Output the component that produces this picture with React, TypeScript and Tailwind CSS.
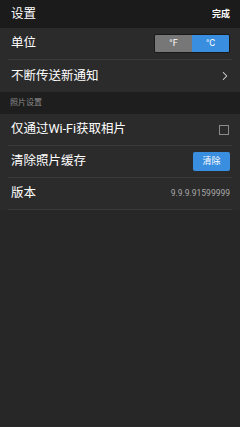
import { ChevronRight } from "lucide-react";

const font = { fontFamily: '"Roboto", "Noto Sans CJK SC", sans-serif' };

function Row({ children, last }: { children: React.ReactNode; last?: boolean }) {
  return (
    <div className="px-2">
      <div className={`flex h-[32px] items-center justify-between pl-[3px] pr-[2px] ${last ? "" : "border-b border-[#3a3a3a]"}`}>
        {children}
      </div>
    </div>
  );
}

export default function App() {
  return (
    <div className="min-h-[427px] w-[240px] bg-[#272727] text-white" style={font}>
      {/* Header */}
      <div className="flex h-[28px] items-center justify-between bg-[#1b1b1b] pl-[11px] pr-[10px]">
        <span className="text-[12.5px] leading-none">设置</span>
        <span className="text-[9px] font-bold leading-none">完成</span>
      </div>

      {/* Units + notifications */}
      <div className="bg-[#2b2b2b]">
        <Row>
          <span className="text-[12.5px] leading-none">单位</span>
          <div className="flex h-[19px] w-[76px] overflow-hidden rounded-[2px] border border-[#1a1a1a] text-[9px]">
            <div className="flex flex-1 items-center justify-center bg-[#777777]">°F</div>
            <div className="flex flex-1 items-center justify-center bg-[#3a8ee0]">°C</div>
          </div>
        </Row>
        <Row last>
          <span className="text-[12.5px] leading-none">不断传送新通知</span>
          <ChevronRight size={14} strokeWidth={1.75} className="-mr-[2px] text-[#dddddd]" />
        </Row>
      </div>

      {/* Section header */}
      <div className="flex h-[22px] items-center bg-[#1e1e1e] pl-[10px]">
        <span className="text-[8px] leading-none text-[#8a8a8a]">照片设置</span>
      </div>

      <div className="bg-[#2b2b2b]">
        <Row>
          <span className="text-[12.5px] leading-none">仅通过Wi-Fi获取相片</span>
          <div className="mr-[1px] h-[10px] w-[10px] border border-[#8a8a8a]" />
        </Row>
        <Row>
          <span className="text-[12.5px] leading-none">清除照片缓存</span>
          <div className="flex h-[19px] w-[37px] items-center justify-center rounded-[2px] bg-[#3a8ee0] text-[9px]">
            清除
          </div>
        </Row>
        <Row>
          <span className="text-[12.5px] leading-none">版本</span>
          <span className="text-[8.5px] leading-none text-[#a8a8a8]">9.9.9.91599999</span>
        </Row>
      </div>
    </div>
  );
}
